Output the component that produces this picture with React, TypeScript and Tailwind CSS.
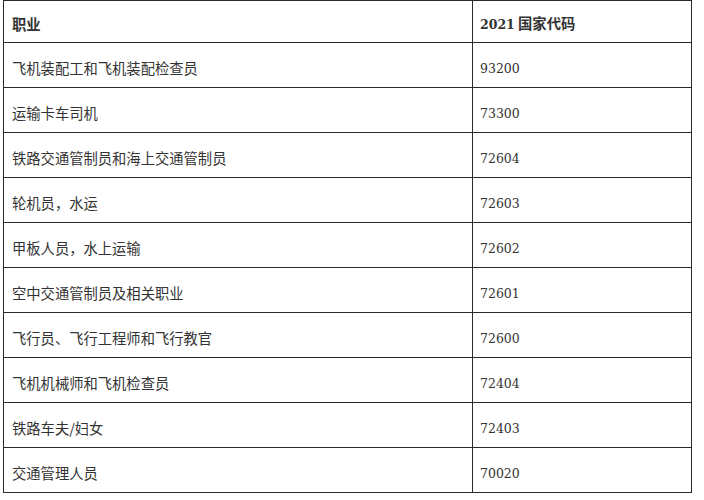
const rows: [string, string][] = [
  ["飞机装配工和飞机装配检查员", "93200"],
  ["运输卡车司机", "73300"],
  ["铁路交通管制员和海上交通管制员", "72604"],
  ["轮机员，水运", "72603"],
  ["甲板人员，水上运输", "72602"],
  ["空中交通管制员及相关职业", "72601"],
  ["飞行员、飞行工程师和飞行教官", "72600"],
  ["飞机机械师和飞机检查员", "72404"],
  ["铁路车夫/妇女", "72403"],
  ["交通管理人员", "70020"],
];

export default function App() {
  return (
    <div className="bg-white w-[704px] h-[500px] pl-[3px] text-[#333]">
      <table className="w-[689px] border-collapse border border-[#2a2a2a]">
        <thead>
          <tr className="h-[42px]">
            <th className="w-[469px] border border-[#2a2a2a] pl-[8px] pt-[4px] text-left text-[14.3px] font-bold font-['Noto_Sans_CJK_SC','Noto_Sans',sans-serif]">
              职业
            </th>
            <th className="border border-[#2a2a2a] pl-[7px] pt-[4px] text-left text-[14.3px] font-bold font-['Noto_Sans_CJK_SC','Noto_Sans',sans-serif]">
              <span className="text-[12.5px] font-['DejaVu_Serif',serif]">2021</span> 国家代码
            </th>
          </tr>
        </thead>
        <tbody>
          {rows.map(([job, code]) => (
            <tr key={code} className="h-[45px]">
              <td className="border border-[#2a2a2a] pl-[8px] pt-[5px] text-[14.3px] font-['Noto_Sans_CJK_SC','Noto_Sans',sans-serif]">
                {job}
              </td>
              <td className="border border-[#2a2a2a] pl-[7px] pt-[8px] text-[12.5px] font-['DejaVu_Serif','Noto_Sans_CJK_SC',serif]">
                {code}
              </td>
            </tr>
          ))}
        </tbody>
      </table>
    </div>
  );
}
